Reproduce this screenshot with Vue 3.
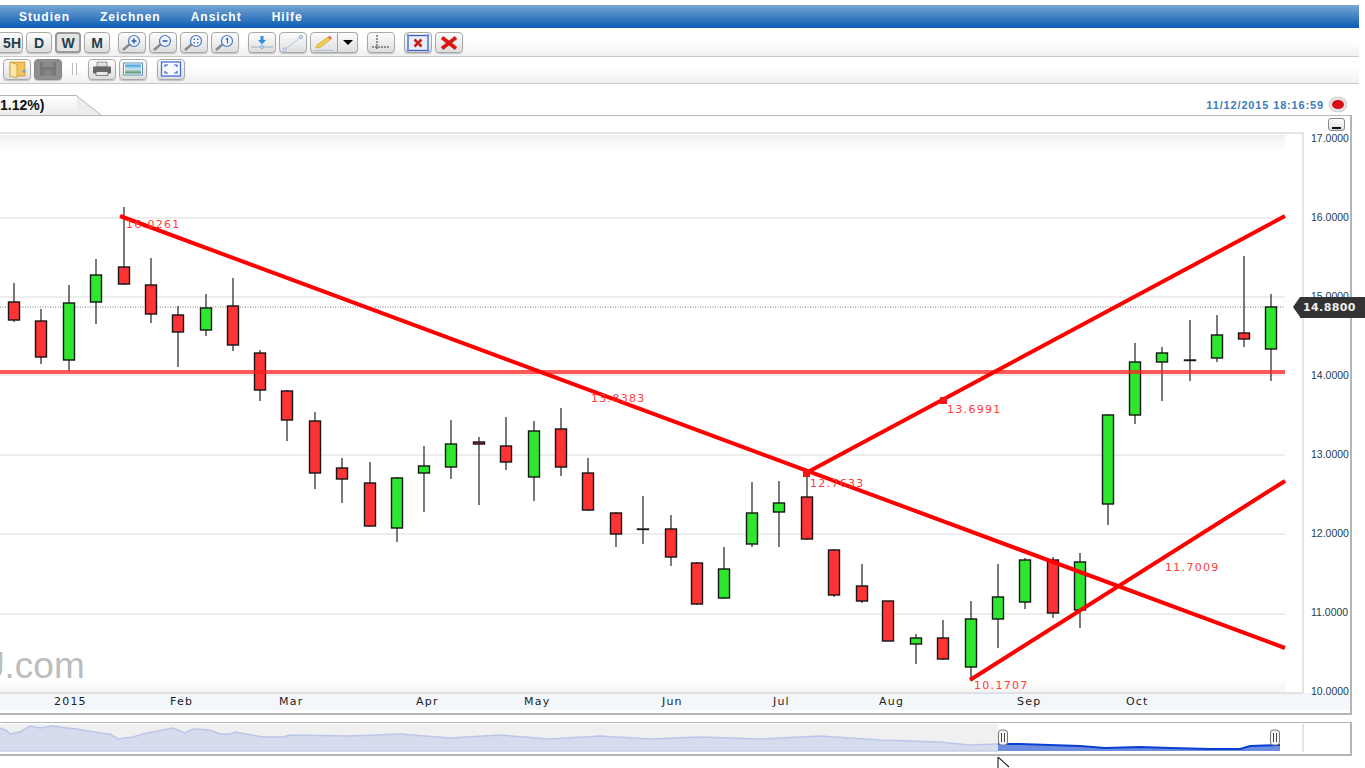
<script setup>
// candle data in page pixels: x, wick top/bottom, body top/bottom, up = green
const candles = [
  [14, 283, 322, 302, 320, 0], [41, 309, 364, 321, 357, 0], [69, 285, 371, 303, 360, 1],
  [96, 259, 324, 275, 302, 1], [124, 207, 285, 267, 284, 0], [151, 258, 323, 285, 314, 0],
  [178, 306, 367, 315, 332, 0], [206, 294, 336, 308, 330, 1], [233, 278, 351, 306, 345, 0],
  [260, 350, 401, 353, 390, 0], [287, 390, 441, 391, 420, 0], [315, 412, 489, 421, 473, 0],
  [342, 458, 503, 468, 479, 0], [370, 462, 527, 483, 526, 0], [397, 477, 542, 478, 528, 1],
  [424, 446, 512, 466, 473, 1], [451, 420, 479, 444, 467, 1], [479, 437, 505, 442, 444, 0],
  [506, 417, 470, 446, 462, 0], [534, 421, 501, 431, 477, 1], [561, 408, 476, 429, 467, 0],
  [588, 458, 511, 473, 510, 0], [616, 512, 547, 513, 534, 0], [643, 496, 544, 529, 529, 0],
  [671, 515, 566, 529, 557, 0], [697, 562, 605, 563, 604, 0], [724, 547, 599, 569, 598, 1],
  [752, 482, 547, 513, 544, 1], [779, 481, 547, 503, 512, 1], [807, 472, 540, 497, 539, 0],
  [834, 549, 597, 550, 595, 0], [862, 564, 603, 586, 601, 0], [888, 601, 641, 601, 641, 0],
  [916, 634, 664, 638, 644, 1], [943, 620, 660, 638, 659, 0], [971, 601, 680, 619, 667, 1],
  [998, 564, 648, 597, 619, 1], [1025, 558, 609, 560, 602, 1], [1053, 557, 618, 560, 613, 0],
  [1080, 553, 628, 562, 610, 1], [1108, 414, 525, 415, 504, 1], [1135, 343, 424, 362, 415, 1],
  [1162, 347, 401, 353, 362, 1], [1190, 320, 381, 360, 360, 0], [1217, 315, 362, 335, 358, 1],
  [1244, 256, 347, 333, 339, 0], [1271, 294, 381, 307, 349, 1]
]

const gridLines = [218, 297, 375, 455, 534, 614]
const axisLabels = [
  ['17.0000', 142], ['16.0000', 221], ['15.0000', 300], ['14.0000', 379],
  ['13.0000', 458], ['12.0000', 537], ['11.0000', 616], ['10.0000', 695]
]
const months = [
  ['2015', 54], ['Feb', 170], ['Mar', 279], ['Apr', 416], ['May', 524],
  ['Jun', 662], ['Jul', 773], ['Aug', 879], ['Sep', 1017], ['Oct', 1126]
]
const trendLabels = [
  ['16.0261', 126, 228], ['13.8383', 591, 402], ['13.6991', 947, 413],
  ['12.7633', 810, 487], ['11.7009', 1165, 571], ['10.1707', 974, 689]
]

// navigator outline
const navPoints = [
  [0, 727], [7, 730], [10, 733], [20, 731], [30, 725], [40, 727], [52, 725], [67, 727], [77, 728],
  [100, 732], [110, 733], [118, 738], [133, 736], [143, 733], [173, 727], [185, 732], [193, 728],
  [210, 729], [220, 733], [230, 733], [235, 731], [263, 736], [283, 736], [290, 734], [350, 735],
  [400, 733], [450, 737], [500, 734], [550, 738], [600, 735], [650, 738], [700, 736], [760, 738],
  [820, 735], [880, 739], [940, 741], [970, 744], [998, 743]
]
const selPoints = [
  [998, 743], [1020, 743], [1050, 744], [1080, 745], [1105, 747], [1140, 746], [1170, 747], [1210, 748],
  [1240, 748], [1250, 745], [1280, 744]
]
const toPoly = (pts) => pts.map((p) => p.join(',')).join(' ')
const navArea = toPoly([...navPoints, [998, 750], [0, 750]])
const selArea = toPoly([...selPoints, [1280, 750], [998, 750]])
</script>

<template>
  <div class="page">
    <nav class="menu">
      <span>Studien</span>
      <span>Zeichnen</span>
      <span>Ansicht</span>
      <span>Hilfe</span>
    </nav>

    <div class="toolbar first">
      <button class="tb txt">5H</button>
      <button class="tb txt">D</button>
      <button class="tb txt on">W</button>
      <button class="tb txt">M</button>

      <button class="tb sep-first">
        <svg viewBox="0 0 24 18"><path d="M3 16l7-6" class="handle" /><circle cx="14" cy="7" r="5.5" class="lens" /><path d="M11.5 7h5M14 4.5v5" class="glyph" /></svg>
      </button>
      <button class="tb">
        <svg viewBox="0 0 24 18"><path d="M3 16l7-6" class="handle" /><circle cx="14" cy="7" r="5.5" class="lens" /><path d="M11.5 7h5" class="glyph" /></svg>
      </button>
      <button class="tb">
        <svg viewBox="0 0 24 18"><path d="M3 16l7-6" class="handle" /><circle cx="14" cy="7" r="5.5" class="lens" /><path d="M12 5h1M15 5h1M12 9h1M15 9h1M12 5v1M16 5v1M12 8v1M16 8v1" class="glyph thin" /></svg>
      </button>
      <button class="tb">
        <svg viewBox="0 0 24 18"><path d="M3 16l7-6" class="handle" /><circle cx="14" cy="7" r="5.5" class="lens" /><path d="M13 5.5l1.500-1v5" class="glyph thin" /></svg>
      </button>

      <button class="tb sep">
        <svg viewBox="0 0 24 18"><path d="M10.5 2h3v4H16L12 10.500 8 6h2.500z" fill="#2f8fe0" /><path d="M1 13h22" stroke="#8fb3d9" /><circle cx="12" cy="13" r="1.500" fill="#dbe8f5" stroke="#7fa6d0" /></svg>
      </button>
      <button class="tb">
        <svg viewBox="0 0 24 18"><path d="M3 16L20 3" stroke="#a8c3e0" /><circle cx="3.500" cy="15.500" r="1.500" fill="#fff" stroke="#7fa6d0" /><circle cx="20" cy="3" r="1.500" fill="#fff" stroke="#7fa6d0" /></svg>
      </button>
      <div class="split">
        <button class="tb joined">
          <svg viewBox="0 0 24 18"><path d="M5 11L16 3l2.500 2.500L8 13.500l-4 .5z" fill="#f3cf45" stroke="#b89a30" stroke-width=".6" /><path d="M16 3l1.500-1.200 2.500 2.500-1.500 1.200z" fill="#e85a5a" /><path d="M2 16.500h20" stroke="#a9bfd8" /></svg>
        </button>
        <button class="tb joined drop"><span class="caret"></span></button>
      </div>

      <button class="tb sep">
        <svg viewBox="0 0 24 18"><path d="M8 1v14M3 13h18" stroke="#333" stroke-dasharray="2 1" fill="none" /></svg>
      </button>

      <button class="tb sep">
        <svg viewBox="0 0 24 18"><rect x="2" y="1.500" width="20" height="15" fill="#e8eefb" stroke="#3a5fc8" stroke-width="1.300" /><path d="M8.500 5.500l7 7M15.500 5.500l-7 7" stroke="#c81f1f" stroke-width="2.600" /><g fill="#6f92e6"><circle cx="2" cy="1.500" r="1.400" /><circle cx="22" cy="1.500" r="1.400" /><circle cx="2" cy="16.500" r="1.400" /><circle cx="22" cy="16.500" r="1.400" /></g></svg>
      </button>
      <button class="tb">
        <svg viewBox="0 0 24 18"><path d="M5 3.500l14 11M19 3.500l-14 11" stroke="#d81818" stroke-width="3.800" /></svg>
      </button>
    </div>

    <div class="toolbar second">
      <button class="tb">
        <svg viewBox="0 0 24 18"><path d="M5 2h15v14H5z" fill="#f2c35c" stroke="#c79a35" stroke-width=".8" /><path d="M5 2l7 2.500V18l-7-2z" fill="#fbe7a8" stroke="#c79a35" stroke-width=".8" /><circle cx="19" cy="11" r="1.500" fill="#6aa6c8" /></svg>
      </button>
      <button class="tb dark">
        <svg viewBox="0 0 24 18"><path d="M4 2h16v14H4z" fill="#797979" /><path d="M7 2h10v5H7z" fill="#8a8a8a" /><path d="M8 10h8v6H8z" fill="#858585" /></svg>
      </button>
      <span class="grip"></span>
      <button class="tb">
        <svg viewBox="0 0 24 18"><path d="M7 2h10v5H7z" fill="#ddd" stroke="#777" stroke-width=".7" /><rect x="3" y="6.500" width="18" height="7" rx="1" fill="#666" /><rect x="6" y="11.500" width="12" height="4" fill="#e8e8e8" stroke="#555" stroke-width=".7" /></svg>
      </button>
      <button class="tb">
        <svg viewBox="0 0 24 18">
          <defs>
            <linearGradient id="landscape" x1="0" y1="0" x2="0" y2="1">
              <stop offset="0" stop-color="#2f9ae0" />
              <stop offset=".5" stop-color="#cfe6f2" />
              <stop offset="1" stop-color="#4f8a62" />
            </linearGradient>
          </defs>
          <rect x="2.500" y="3" width="19" height="12" fill="#fff" stroke="#5d8fb5" />
          <rect x="4" y="4.500" width="16" height="9" fill="url(#landscape)" />
        </svg>
      </button>
      <button class="tb sep-small">
        <svg viewBox="0 0 24 18"><rect x="2.500" y="2" width="19" height="14" fill="#f8faff" stroke="#3f6fd8" stroke-width="1.300" /><path d="M6 7V5h3M15 5h3v2M18 11v2h-3M9 13H6v-2" fill="none" stroke="#2f5bc8" stroke-width="1.200" /></svg>
      </button>
    </div>

    <div class="tabrow">
      <div class="tab"><span>1.12%)</span></div>
      <svg class="tab-edge" viewBox="0 0 24 20" preserveAspectRatio="none">
        <path d="M0 1L24 20H0z" fill="#ececec" />
        <path d="M0 1L24 20" stroke="#b5b5b5" fill="none" />
      </svg>
      <span class="stamp">11/12/2015 18:16:59</span>
      <span class="rec"></span>
    </div>

    <section class="chart">
      <svg class="plot" viewBox="0 116 1352 598" width="1352" height="598">
        <defs>
          <linearGradient id="fadeTop" x1="0" y1="0" x2="0" y2="1">
            <stop offset="0" stop-color="#efefef" />
            <stop offset="1" stop-color="#ffffff" />
          </linearGradient>
          <linearGradient id="fadeBottom" x1="0" y1="0" x2="0" y2="1">
            <stop offset="0" stop-color="#ffffff" />
            <stop offset="1" stop-color="#f4f4f4" />
          </linearGradient>
        </defs>

        <rect x="0" y="693" width="1350" height="17" fill="#f3f7fc" />
        <rect x="-2" y="133" width="1305" height="560" fill="#fff" stroke="#c9c9c9" />
        <rect x="0" y="135" width="1285" height="16" fill="url(#fadeTop)" />
        <rect x="0" y="678" width="1285" height="14" fill="url(#fadeBottom)" />

        <text x="-16" y="678" class="mark"><tspan class="mark-j">J</tspan>.com</text>

        <line v-for="y in gridLines" :key="y" x1="0" x2="1285" :y1="y" :y2="y" stroke="#dcdcdc" />
        <line x1="0" x2="1285" y1="307" y2="307" stroke="#777" stroke-dasharray="1 1.5" />

        <g v-for="c in candles" :key="c[0]">
          <line :x1="c[0]" :x2="c[0]" :y1="c[1]" :y2="c[2]" stroke="#333" stroke-width="1.3" />
          <rect
            :x="c[0] - 5.5"
            :y="c[3]"
            width="11"
            :height="Math.max(c[4] - c[3], 0.5)"
            :fill="c[5] ? '#2ee62e' : '#ff3333'"
            stroke="#151515"
            stroke-width="1.4"
          />
        </g>

        <line x1="0" x2="1285" y1="372" y2="372" stroke="#ff2020" stroke-opacity=".75" stroke-width="4" />
        <g stroke="#ff0000" stroke-width="4">
          <line x1="120" y1="216" x2="1285" y2="648" />
          <line x1="806" y1="473" x2="1285" y2="216" />
          <line x1="970" y1="680" x2="1285" y2="481" />
        </g>
        <rect x="803" y="470" width="7" height="7" fill="#f01818" />
        <rect x="940" y="397" width="7" height="7" fill="#f01818" />

        <text v-for="t in trendLabels" :key="t[0]" :x="t[1]" :y="t[2]" class="trend">{{ t[0] }}</text>
        <text v-for="a in axisLabels" :key="a[0]" x="1311" :y="a[1]" class="axis">{{ a[0] }}</text>
        <text v-for="m in months" :key="m[0]" :x="m[1]" y="705" class="month">{{ m[0] }}</text>
      </svg>

      <button class="collapse"><span></span></button>
    </section>

    <div class="price">14.8800</div>

    <section class="navigator">
      <svg viewBox="0 723 1352 28" width="1352" height="28">
        <rect x="0" y="723" width="998" height="28" fill="#f0f0f0" />
        <rect x="1280" y="723" width="23" height="28" fill="#fff" />
        <polygon :points="navArea" fill="#d6dbee" />
        <polyline :points="toPoly(navPoints)" fill="none" stroke="#bcc6e8" stroke-width="1.5" />
        <line x1="0" x2="998" y1="750" y2="750" stroke="#bcc6e8" />
        <polygon :points="selArea" fill="#6c8ce0" />
        <polyline :points="toPoly(selPoints)" fill="none" stroke="#0a3fd0" stroke-width="2" />
        <line x1="1303" x2="1303" y1="723" y2="751" stroke="#c9c9c9" />
        <g v-for="x in [1003, 1275]" :key="x">
          <rect :x="x - 4.5" y="729" width="9" height="15" rx="3" fill="#f8f8f8" stroke="#777" />
          <path :d="`M${x - 1.5} 732v9M${x + 1.5} 732v9`" stroke="#444" />
        </g>
      </svg>
    </section>

    <svg class="cursor" viewBox="0 0 14 12" width="14" height="12">
      <path d="M1 0v12M1 0l11 10" fill="none" stroke="#222" stroke-width="1.1" />
    </svg>
  </div>
</template>

<style>
html, body {
  margin: 0;
  overflow: hidden;
  background: #fff;
}
</style>

<style scoped>
.page {
  position: relative;
  width: 1365px;
  height: 768px;
  overflow: hidden;
  padding-top: 5px;
  box-sizing: border-box;
  background: #fff;
  font-family: "Liberation Sans", Arial, sans-serif;
}

/* 菜单栏 */
.menu {
  display: flex;
  gap: 30px;
  align-items: center;
  width: 1359px;
  height: 23px;
  padding-left: 19px;
  box-sizing: border-box;
  background: linear-gradient(#78a6d3, #0a5bb4);
  color: #fff;
  font-size: 12px;
  font-weight: bold;
  letter-spacing: 1px;
}

/* 工具栏 */
.toolbar {
  display: flex;
  align-items: center;
  gap: 3px;
  width: 1359px;
  box-sizing: border-box;
  background: linear-gradient(#fff 45%, #f0f0f0);
  border-bottom: 1px solid #c9c9c9;
}

.toolbar.first {
  height: 28px;
  margin-top: 1px;
}

.toolbar.second {
  height: 27px;
  padding-left: 3px;
  padding-bottom: 2px;
}

.tb {
  flex: none;
  width: 28px;
  height: 21px;
  padding: 0;
  display: flex;
  align-items: center;
  justify-content: center;
  border: 1px solid #a8a8a8;
  border-radius: 4px;
  background: linear-gradient(#fdfdfd, #dedede);
  box-shadow: 0 1px 1px rgba(0, 0, 0, .2);
}

.tb svg {
  width: 24px;
  height: 18px;
}

.txt {
  width: 26px;
  color: #1f3f4a;
  font: bold 14px "Liberation Sans", Arial, sans-serif;
}

.txt:first-child {
  width: 27px;
  margin-left: -4px;
  justify-content: flex-end;
  padding-right: 1px;
}

.txt.on {
  background: #e4e4e4;
  border-width: 2px;
  border-color: #9a9a9a;
}

.sep-first { margin-left: 5px; }
.sep { margin-left: 6px; }
.sep-small { margin-left: 7px; }

.split {
  display: flex;
  flex: none;
}

.joined { border-radius: 4px 0 0 4px; }

.joined.drop {
  width: 20px;
  border-left: 0;
  border-radius: 0 4px 4px 0;
}

.caret {
  border-left: 5px solid transparent;
  border-right: 5px solid transparent;
  border-top: 5px solid #000;
}

.dark {
  background: #8f8f8f;
  border-color: #888;
}

.grip {
  width: 3px;
  height: 12px;
  margin: 0 8px 0 7px;
  border-left: 1px solid #bbb;
  border-right: 1px solid #bbb;
}

/* 标签行 */
.tabrow {
  display: flex;
  align-items: flex-end;
  height: 31px;
  width: 1352px;
}

.tab {
  width: 77px;
  height: 19px;
  background: linear-gradient(#fff, #ececec);
  border-top: 1px solid #b5b5b5;
  font-size: 14px;
  font-weight: bold;
  color: #111;
}

.tab span {
  display: block;
  margin-top: 1px;
  line-height: 16px;
}

.tab-edge {
  width: 24px;
  height: 20px;
}

.stamp {
  margin-left: auto;
  margin-bottom: 4px;
  color: #3a7cbd;
  font-size: 11px;
  font-weight: bold;
  letter-spacing: .85px;
}

.rec {
  width: 12px;
  height: 9px;
  margin: 0 5px 3px 5px;
  border-radius: 50%;
  background: #d80f1a;
  border: 3px solid #e2e2e2;
  box-shadow: 0 0 1px #777;
}

/* 图表 */
.chart {
  position: relative;
  width: 1352px;
  height: 600px;
  box-sizing: border-box;
  border-top: 1px solid #b5b5b5;
  border-right: 2px solid #b5b5b5;
  border-bottom: 2px solid #b5b5b5;
}

.plot {
  display: block;
}

.axis {
  font: 10.5px "Liberation Sans", Arial, sans-serif;
  fill: #24404c;
}

.month {
  font: 11px "DejaVu Sans", sans-serif;
  letter-spacing: 1.2px;
  fill: #222;
}

.trend {
  font: 11px "DejaVu Sans", sans-serif;
  letter-spacing: 1.3px;
  fill: #ff3a3a;
}

.mark {
  font: 37px "Liberation Sans", Arial, sans-serif;
  fill: #bcbcbc;
}

.mark-j {
  font-weight: bold;
}

.collapse {
  position: absolute;
  top: 2px;
  right: 5px;
  width: 17px;
  height: 13px;
  padding: 0;
  border: 1px solid #888;
  border-radius: 3px;
  background: linear-gradient(#fff, #ddd);
}

.collapse span {
  display: block;
  width: 9px;
  height: 2px;
  margin: 7px auto 0;
  background: #111;
}

.price {
  position: absolute;
  top: 297px;
  left: 1300px;
  width: 65px;
  height: 21px;
  box-sizing: border-box;
  padding-left: 3px;
  background: #333;
  color: #eee;
  font: bold 11px/21px "DejaVu Sans", sans-serif;
  letter-spacing: .4px;
}

.price::before {
  content: "";
  position: absolute;
  left: -7px;
  top: 0;
  border-top: 10.5px solid transparent;
  border-bottom: 10.5px solid transparent;
  border-right: 7px solid #333;
}

.navigator {
  width: 1352px;
  height: 34px;
  margin-top: 7px;
  box-sizing: border-box;
  padding-top: 1px;
  border-top: 1px solid #b5b5b5;
  border-right: 2px solid #b5b5b5;
  border-bottom: 2px solid #b5b5b5;
}

.navigator svg {
  display: block;
}

.cursor {
  position: absolute;
  left: 997px;
  top: 757px;
}

.handle {
  stroke: #8a8a8a;
  stroke-width: 2.5;
  fill: none;
}

.lens {
  fill: #eef4fc;
  stroke: #4a78c0;
  stroke-width: 1.2;
}

.glyph {
  stroke: #2f5fb0;
  stroke-width: 1.6;
  fill: none;
}

.glyph.thin {
  stroke-width: 1.1;
}
</style>
